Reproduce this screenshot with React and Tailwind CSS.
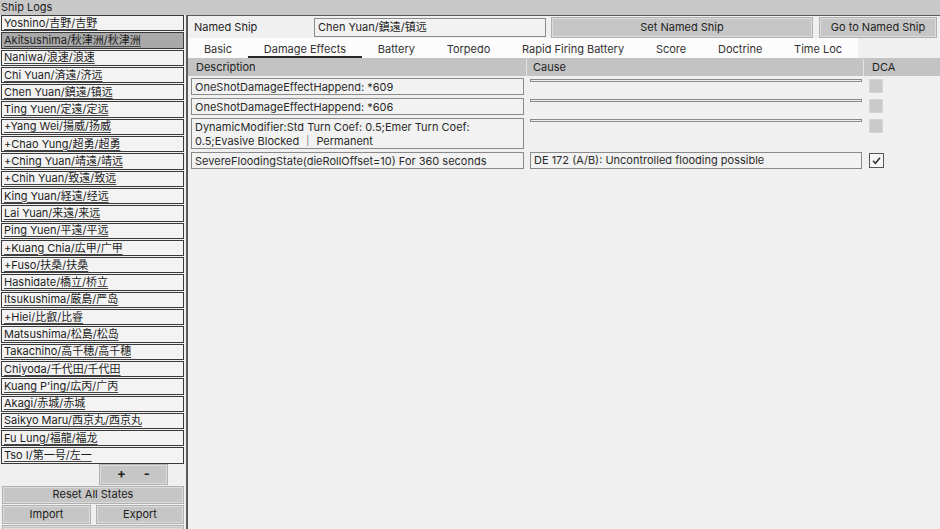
import React from "react";

const ships = [
  "Yoshino/吉野/吉野",
  "Akitsushima/秋津洲/秋津洲",
  "Naniwa/浪速/浪速",
  "Chi Yuan/済遠/济远",
  "Chen Yuan/鎮遠/镇远",
  "Ting Yuen/定遠/定远",
  "+Yang Wei/揚威/扬威",
  "+Chao Yung/超勇/超勇",
  "+Ching Yuan/靖遠/靖远",
  "+Chih Yuan/致遠/致远",
  "King Yuan/経遠/经远",
  "Lai Yuan/来遠/来远",
  "Ping Yuen/平遠/平远",
  "+Kuang Chia/広甲/广甲",
  "+Fuso/扶桑/扶桑",
  "Hashidate/橋立/桥立",
  "Itsukushima/厳島/严岛",
  "+Hiei/比叡/比睿",
  "Matsushima/松島/松岛",
  "Takachiho/高千穂/高千穗",
  "Chiyoda/千代田/千代田",
  "Kuang P'ing/広丙/广丙",
  "Akagi/赤城/赤城",
  "Saikyo Maru/西京丸/西京丸",
  "Fu Lung/福龍/福龙",
  "Tso I/第一号/左一",
];

const tabs = [
  "Basic",
  "Damage Effects",
  "Battery",
  "Torpedo",
  "Rapid Firing Battery",
  "Score",
  "Doctrine",
  "Time Loc",
];

function Btn({ children, className = "" }) {
  return (
    <div
      className={
        "flex items-center justify-center bg-[#c6c6c6] border border-[#dcdcdc] outline outline-1 outline-[#b0b0b0] text-[#222] " +
        className
      }
    >
      {children}
    </div>
  );
}

function Cb({ checked }) {
  if (checked) {
    return (
      <div className="w-[15px] h-[15px] border border-[#555] bg-[#f6f6f6] flex items-center justify-center">
        <svg width="11" height="11" viewBox="0 0 11 11">
          <path d="M2 5.8 L4.4 8.2 L9 2.8" fill="none" stroke="#333" strokeWidth="1.6" />
        </svg>
      </div>
    );
  }
  return <div className="w-[14px] h-[14px] bg-[#c9c9c9] border border-[#d4d4d4]" />;
}

function EmptyCause() {
  return <div className="mt-[1px] h-[3px] w-full border border-[#8a8a8a] bg-[#eeeeee]" />;
}

export default function App() {
  return (
    <div
      className="w-[940px] h-[529px] bg-[#f0f0f0] flex flex-col overflow-hidden text-[11px] text-[#1e1e1e]"
      style={{ fontFamily: 'Inter, "Noto Sans CJK JP", sans-serif' }}
    >
      <div className="h-[15px] bg-[#c8c8c8] flex items-center pl-[1px] leading-none">Ship Logs</div>
      <div className="flex flex-1 min-h-0">
        {/* left */}
        <div className="w-[186px] flex flex-col pl-[1px] pr-[2px]">
          <div className="flex flex-col gap-[1px]">
            {ships.map((s, i) => (
              <div
                key={s}
                className={
                  "h-[16.3px] border border-[#3a3a3a] flex items-center pl-[2px] leading-none whitespace-nowrap overflow-hidden " +
                  (i === 1 ? "bg-[#a9a9a9]" : "bg-[#f3f3f3]")
                }
              >
                <span className="underline underline-offset-[2px] decoration-[#444]">{s}</span>
              </div>
            ))}
          </div>
          <div className="flex justify-start pl-[99px] mt-[1px]">
            <Btn className="w-[67px] h-[19px] gap-[18px] font-bold text-[13px]">
              <span>+</span>
              <span>-</span>
            </Btn>
          </div>
          <Btn className="mt-[3px] ml-[2px] w-[180px] h-[16px]">Reset All States</Btn>
          <div className="flex gap-[7px] mt-[3px] ml-[2px]">
            <Btn className="w-[87px] h-[17px]">Import</Btn>
            <Btn className="w-[86px] h-[17px]">Export</Btn>
          </div>
          <Btn className="mt-[3px] ml-[2px] w-[180px] h-[16px]"> </Btn>
        </div>
        {/* right */}
        <div className="flex-1 border-l-2 border-t border-[#5a5a5a] flex flex-col">
          <div className="h-[22px] flex items-center pl-[6px]">
            <div className="w-[120px]">Named Ship</div>
            <div className="w-[232px] h-[19px] border border-[#8a8a8a] bg-[#f2f2f2] flex items-center pl-[3px]">
              Chen Yuan/鎮遠/镇远
            </div>
            <Btn className="ml-[6px] w-[260px] h-[19px]">Set Named Ship</Btn>
            <Btn className="ml-[8px] w-[116px] h-[19px]">Go to Named Ship</Btn>
          </div>
          <div className="h-[20px] flex">
            <div className="flex bg-[#fcfcfc]">
              {tabs.map((t, i) => (
                <div
                  key={t}
                  className={
                    "px-[15.9px] flex items-center text-[#333] " +
                    (i === 1 ? "border-b-2 border-[#2a2a2a] pt-[4px]" : "pt-[2px]")
                  }
                >
                  {t}
                </div>
              ))}
            </div>
          </div>
          <div className="h-[18px] bg-[#c3c3c3] flex text-[#222] pt-[1px]">
            <div className="w-[339px] pl-[8px] flex items-center border-r border-[#e2e2e2]">Description</div>
            <div className="w-[337px] pl-[6px] flex items-center border-r border-[#e2e2e2]">Cause</div>
            <div className="flex-1 pl-[8px] flex items-center">DCA</div>
          </div>
          <div className="flex flex-col gap-[3px] pt-[2px] text-[#2a2a2a]">
            {[
              { d: "OneShotDamageEffectHappend: *609" },
              { d: "OneShotDamageEffectHappend: *606" },
              {
                d: (
                  <>
                    DynamicModifier:Std Turn Coef: 0.5;Emer Turn Coef:
                    <br />
                    0.5;Evasive Blocked │ Permanent
                  </>
                ),
                tall: true,
              },
              {
                d: "SevereFloodingState(dieRollOffset=10) For 360 seconds",
                cause: "DE 172 (A/B): Uncontrolled flooding possible",
                checked: true,
              },
            ].map((r, i) => (
              <div key={i} className="flex items-start">
                <div
                  className={
                    "ml-[3px] w-[333px] border border-[#8a8a8a] bg-[#f2f2f2] pl-[3px] leading-[14px] " +
                    (r.tall ? "h-[31px] pt-[1px]" : "h-[17px] flex items-center")
                  }
                >
                  {r.d}
                </div>
                <div className="ml-[6px] w-[332px]">
                  {r.cause ? (
                    <div className="h-[17px] border border-[#8a8a8a] bg-[#f2f2f2] pl-[3px] flex items-center">
                      {r.cause}
                    </div>
                  ) : (
                    <EmptyCause />
                  )}
                </div>
                <div className="ml-[7px] mt-[1px]">
                  <Cb checked={r.checked} />
                </div>
              </div>
            ))}
          </div>
        </div>
      </div>
    </div>
  );
}
